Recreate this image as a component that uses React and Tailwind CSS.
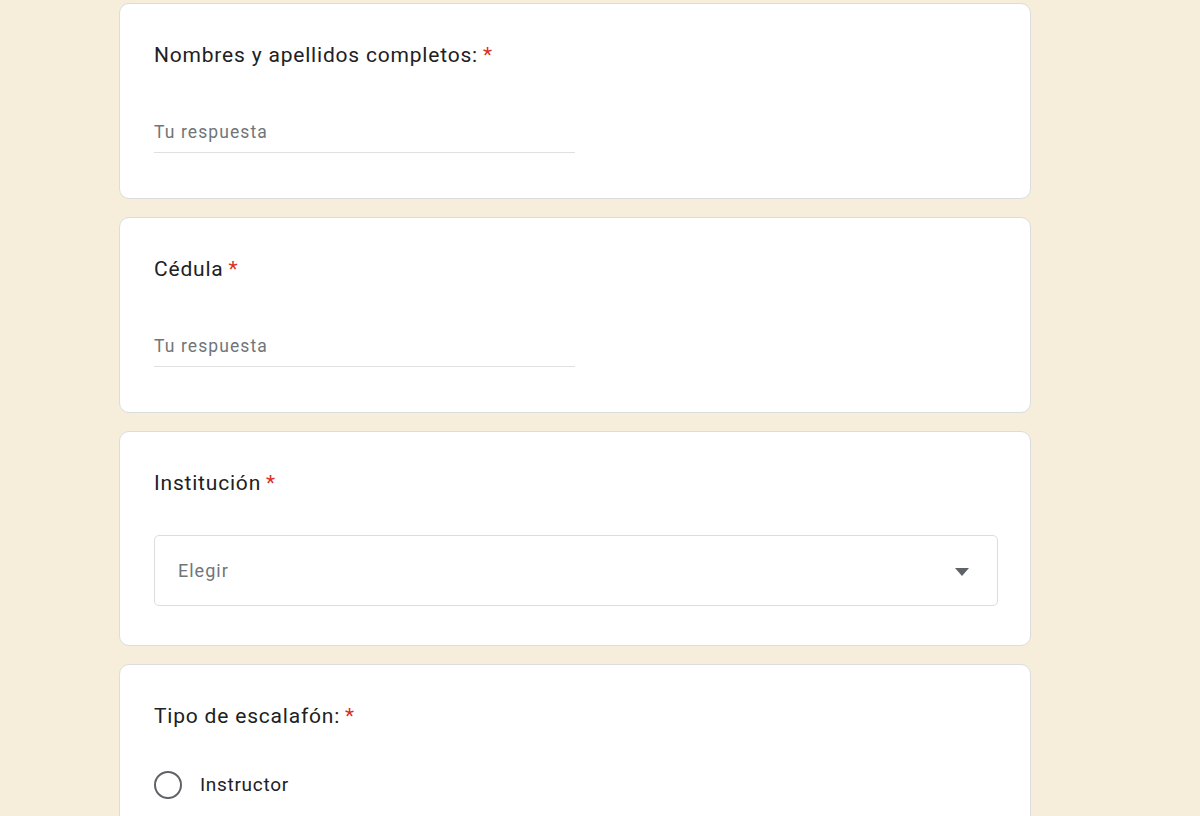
const font = { fontFamily: 'Roboto, "Noto Sans", Arial, sans-serif' };

function Title({ children }) {
  return (
    <div className="h-[32px] pt-px text-[21px] leading-[32px] tracking-[0.8px] text-[#202124]">
      {children}
      <span className="ml-[5px] text-[#d93025]">*</span>
    </div>
  );
}

function Card({ children, className = '' }) {
  return (
    <div className={`rounded-[10px] border border-[#dadce0] bg-white pl-[34px] pr-[32px] pt-[34px] ${className}`}>
      {children}
    </div>
  );
}

function TextQuestion({ label }) {
  return (
    <Card className="pb-[45px]">
      <Title>{label}</Title>
      <div className="mt-[41px] flex h-[42px] w-[421px] items-center border-b border-[#e0e0e0] pt-[2px] text-[17.5px] tracking-[1.1px] text-[#70757a]">
        Tu respuesta
      </div>
    </Card>
  );
}

export default function App() {
  return (
    <div className="h-[816px] overflow-hidden bg-[#f6eedb]" style={font}>
      <div className="ml-[119px] flex w-[912px] flex-col gap-[18px] pt-[3px]">
        <TextQuestion label="Nombres y apellidos completos:" />
        <TextQuestion label="Cédula" />
        <Card className="pb-[39px]">
          <Title>Institución</Title>
          <div className="mt-[37px] flex h-[71px] items-center justify-between rounded-[5px] border border-[#dadce0] pl-[23px] pr-[27px] text-[18px] tracking-[1px] text-[#70757a]">
            <span>Elegir</span>
            <svg width="16" height="8" viewBox="0 0 16 8" className="mt-[2px]">
              <path d="M1 0h14L8 8z" fill="#5f6368" />
            </svg>
          </div>
        </Card>
        <Card className="pb-[40px]">
          <Title>Tipo de escalafón:</Title>
          <div className="mt-[34px] flex flex-col gap-[20px]">
            {['Instructor', 'Auxiliar', 'Asistente'].map((o) => (
              <div key={o} className="flex h-[40px] items-center">
                <div className="h-[28px] w-[28px] rounded-full border-2 border-[#5f6368]" />
                <span className="ml-[18px] text-[19px] tracking-[0.7px] text-[#202124]">{o}</span>
              </div>
            ))}
          </div>
        </Card>
      </div>
    </div>
  );
}
